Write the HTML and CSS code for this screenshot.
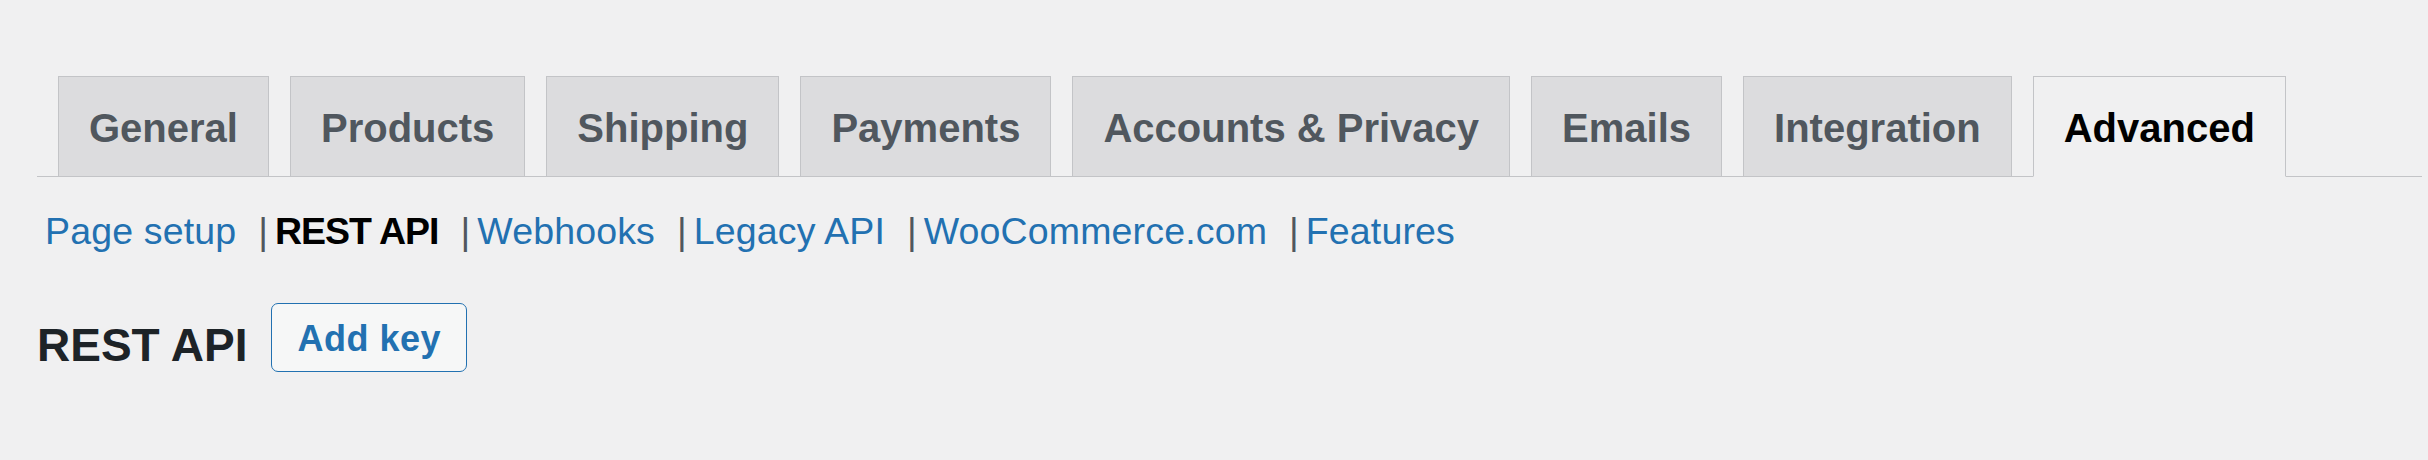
FILE: index.html
```html
<!DOCTYPE html>
<html lang="en">
<head>
<meta charset="utf-8">
<title>Settings – Advanced – REST API</title>
<link rel="stylesheet" href="styles.css">
</head>
<body>
<div class="wrap">
  <nav class="nav-tab-wrapper">
    <a class="nav-tab" href="#">General</a>
    <a class="nav-tab" href="#">Products</a>
    <a class="nav-tab" href="#">Shipping</a>
    <a class="nav-tab" href="#">Payments</a>
    <a class="nav-tab" href="#">Accounts &amp; Privacy</a>
    <a class="nav-tab" href="#">Emails</a>
    <a class="nav-tab" href="#">Integration</a>
    <a class="nav-tab nav-tab-active" href="#">Advanced</a>
  </nav>
  <ul class="subsubsub">
    <li><a href="#">Page setup</a><span class="sep">|</span></li>
    <li><a class="current" href="#">REST API</a><span class="sep">|</span></li>
    <li><a href="#">Webhooks</a><span class="sep">|</span></li>
    <li><a href="#">Legacy API</a><span class="sep">|</span></li>
    <li><a href="#">WooCommerce.com</a><span class="sep">|</span></li>
    <li><a href="#">Features</a></li>
  </ul>
  <div class="title-row">
    <h2 class="section-title">REST API</h2>
    <a class="page-title-action" href="#">Add key</a>
  </div>
</div>
</body>
</html>
```

FILE: styles.css
```css
html, body {
  margin: 0;
  padding: 0;
  background: #f0f0f1;
}

body {
  font-family: "Liberation Sans", Arial, sans-serif;
  color: #1d2327;
}

a {
  text-decoration: none;
}

.wrap {
  padding: 76px 6px 0 37px;
}

.nav-tab-wrapper {
  display: flex;
  align-items: flex-end;
  border-bottom: 1px solid #c3c4c7;
}

.nav-tab {
  display: block;
  margin-left: 21px;
  margin-bottom: -1px;
  padding: 17px 30px 13px;
  border: 1px solid #c3c4c7;
  background: #dcdcde;
  color: #50575e;
  font-size: 40px;
  line-height: 69px;
  font-weight: 700;
  white-space: nowrap;
}

.nav-tab-active {
  background: #f0f0f1;
  border-bottom-color: #f0f0f1;
  color: #000;
}

.subsubsub {
  display: flex;
  list-style: none;
  margin: 28px 0 0;
  padding: 0 0 0 8px;
  font-size: 37.5px;
  line-height: 52px;
  color: #50575e;
}

.subsubsub li {
  display: flex;
  white-space: nowrap;
}

.subsubsub a {
  color: #2271b1;
  letter-spacing: 0.15px;
}

.subsubsub a.current {
  color: #000;
  font-weight: 700;
  letter-spacing: -1px;
}

.sep {
  margin: 0 7px 0 22px;
  color: #50575e;
}

.title-row {
  display: flex;
  align-items: flex-start;
  margin-top: 46px;
}

.section-title {
  margin: 12px 0 0;
  font-size: 46px;
  line-height: 60px;
  font-weight: 700;
  color: #1d2327;
}

.page-title-action {
  display: block;
  margin-left: 24px;
  padding: 3px 25px 0;
  border: 1px solid #2271b1;
  border-radius: 7px;
  background: #f6f7f7;
  color: #2271b1;
  font-size: 36px;
  line-height: 64px;
  font-weight: 700;
  letter-spacing: 0.5px;
}
```
